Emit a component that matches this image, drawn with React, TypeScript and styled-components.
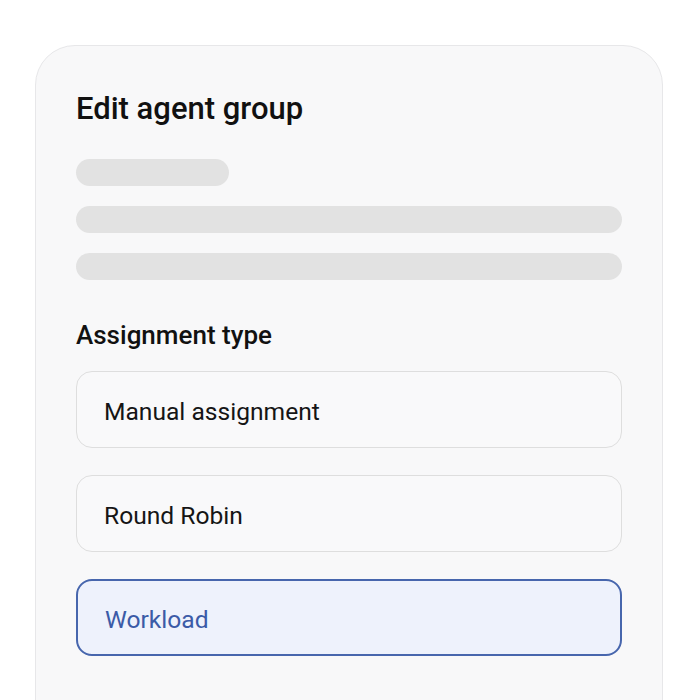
import React from 'react';
import styled, { createGlobalStyle } from 'styled-components';

const GlobalStyle = createGlobalStyle`
  html, body {
    margin: 0;
    padding: 0;
    background: #ffffff;
    font-family: Roboto, 'Liberation Sans', sans-serif;
  }
  * {
    box-sizing: border-box;
  }
`;

const Page = styled.div`
  width: 700px;
  height: 700px;
  overflow: hidden;
  padding: 45px 0 0 35px;
`;

const Card = styled.div`
  width: 628px;
  min-height: 720px;
  background: #f8f8f9;
  border: 1.5px solid #e7e7e9;
  border-radius: 40px;
  padding: 44px 40px 40px 40px;
  display: flex;
  flex-direction: column;
`;

const Title = styled.h1`
  margin: 0;
  font-size: 31px;
  line-height: 37px;
  font-weight: 500;
  color: #111111;
`;

const Skeletons = styled.div`
  display: flex;
  flex-direction: column;
  gap: 20px;
  margin-top: 32px;
`;

const SkeletonBar = styled.div<{ $width?: number }>`
  height: 27px;
  width: ${(p) => (p.$width ? `${p.$width}px` : '100%')};
  background: #e2e2e2;
  border-radius: 14px;
`;

const Label = styled.h2`
  margin: 39px 0 0;
  font-size: 26px;
  line-height: 32px;
  font-weight: 500;
  color: #111111;
`;

const Options = styled.div`
  display: flex;
  flex-direction: column;
  gap: 27px;
  margin-top: 20px;
`;

const Option = styled.div<{ $selected?: boolean }>`
  height: 77px;
  display: flex;
  align-items: center;
  padding: 3px 0 0 27px;
  border-radius: 16px;
  border: ${(p) => (p.$selected ? '2px solid #4766ad' : '1.5px solid #dedede')};
  background: ${(p) => (p.$selected ? '#eef2fc' : '#f9f9fa')};
  color: ${(p) => (p.$selected ? '#3b5ba7' : '#151515')};
  font-size: 24.6px;
  font-weight: 400;
`;

const options = ['Manual assignment', 'Round Robin', 'Workload'];

export default function App() {
  return (
    <>
      <GlobalStyle />
      <Page>
        <Card>
          <Title>Edit agent group</Title>
          <Skeletons>
            <SkeletonBar $width={153} />
            <SkeletonBar />
            <SkeletonBar />
          </Skeletons>
          <Label>Assignment type</Label>
          <Options>
            {options.map((o) => (
              <Option key={o} $selected={o === 'Workload'}>
                {o}
              </Option>
            ))}
          </Options>
        </Card>
      </Page>
    </>
  );
}
